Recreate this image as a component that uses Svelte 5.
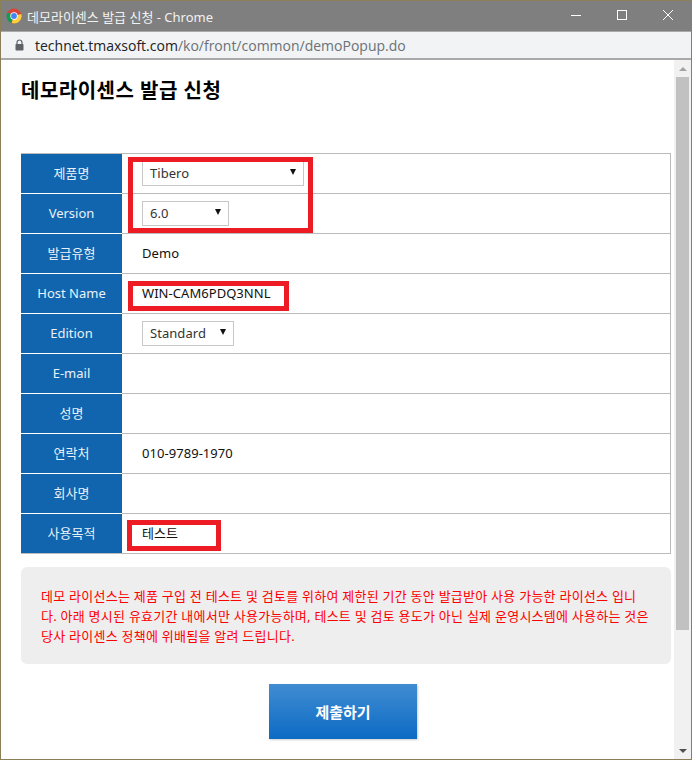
<script>
  const rows = [
    { label: '제품명', kind: 'select', value: 'Tibero', width: 162 },
    { label: 'Version', kind: 'select', value: '6.0', width: 87 },
    { label: '발급유형', kind: 'text', value: 'Demo' },
    { label: 'Host Name', kind: 'input', value: 'WIN-CAM6PDQ3NNL' },
    { label: 'Edition', kind: 'select', value: 'Standard', width: 92 },
    { label: 'E-mail', kind: 'input', value: '' },
    { label: '성명', kind: 'input', value: '' },
    { label: '연락처', kind: 'input', value: '010-9789-1970' },
    { label: '회사명', kind: 'input', value: '' },
    { label: '사용목적', kind: 'input', value: '테스트' }
  ];
</script>

<div class="window">
  <header class="titlebar">
    <svg class="chrome" width="16" height="16" viewBox="0 0 16 16">
      <circle cx="8" cy="8" r="7.5" fill="#db4437" />
      <path d="M8 8 L1.5 4.2 A7.5 7.5 0 0 0 5.6 15.1 Z" fill="#0f9d58" />
      <path d="M8 8 L15.3 6 A7.5 7.5 0 0 1 5.6 15.1 Z" fill="#ffcd40" />
      <circle cx="8" cy="8" r="3.7" fill="#fff" />
      <circle cx="8" cy="8" r="2.9" fill="#4285f4" />
    </svg>
    <span class="title">데모라이센스 발급 신청 - Chrome</span>
    <div class="controls">
      <svg width="12" height="12" viewBox="0 0 12 12"><path d="M1 6.5h10" stroke="#fff" fill="none" /></svg>
      <svg width="12" height="12" viewBox="0 0 12 12"><rect x="1.5" y="1.5" width="9" height="9" stroke="#fff" fill="none" /></svg>
      <svg width="12" height="12" viewBox="0 0 12 12"><path d="M1 1l10 10M11 1L1 11" stroke="#fff" fill="none" /></svg>
    </div>
  </header>
  <div class="addressbar">
    <svg width="9" height="12" viewBox="0 0 9 12">
      <path d="M2 5V3.5a2.5 2.5 0 0 1 5 0V5" fill="none" stroke="#5f6368" stroke-width="1.2" />
      <rect x="0.5" y="5" width="8" height="6.5" rx="0.8" fill="#5f6368" />
    </svg>
    <span class="url"><span class="host">technet.tmaxsoft.com</span>/ko/front/common/demoPopup.do</span>
  </div>
  <div class="viewport">
    <main class="page">
      <h1>데모라이센스 발급 신청</h1>
      <div class="table">
        {#each rows as row}
          <div class="row">
            <div class="label">{row.label}</div>
            <div class="cell">
              {#if row.kind === 'select'}
                <span class="select" style="width: {row.width}px">
                  <span class="value">{row.value}</span><i class="arrow"></i>
                </span>
              {:else}
                {row.value}
              {/if}
            </div>
          </div>
        {/each}
        <span class="mark mark-a"></span>
        <span class="mark mark-b"></span>
        <span class="mark mark-c"></span>
      </div>
      <p class="notice">데모 라이선스는 제품 구입 전 테스트 및 검토를 위하여 제한된 기간 동안 발급받아 사용 가능한 라이선스 입니다. 아래 명시된 유효기간 내에서만 사용가능하며, 테스트 및 검토 용도가 아닌 실제 운영시스템에 사용하는 것은 당사 라이센스 정책에 위배됨을 알려 드립니다.</p>
      <div class="actions"><button>제출하기</button></div>
    </main>
    <aside class="scrollbar">
      <span class="up"></span>
      <span class="thumb"></span>
      <span class="down"></span>
    </aside>
  </div>
</div>

<style>
  :global(body) { margin: 0; }
  .window {
    width: 692px;
    height: 760px;
    box-sizing: border-box;
    border: 1px solid #8b7f58;
    display: flex;
    flex-direction: column;
    overflow: hidden;
    font-family: "Noto Sans", "Noto Sans CJK KR", sans-serif;
    background: #fff;
  }
  .titlebar {
    height: 30px;
    flex: none;
    background: #7f7f7f;
    display: flex;
    align-items: center;
    padding-left: 5px;
    color: #fff;
    box-sizing: border-box;
  }
  .title { margin-left: 5px; font-size: 13px; color: #f2f2f2; }
  .controls {
    margin-left: auto;
    display: flex;
    gap: 34px;
    padding-right: 17px;
    padding-bottom: 2px;
    align-items: center;
  }
  .addressbar {
    height: 29px;
    flex: none;
    box-sizing: border-box;
    background: #f1f3f4;
    border-top: 1px solid #a9a9a9;
    border-bottom: 2px solid #a9a9a9;
    display: flex;
    align-items: center;
    padding-left: 14px;
    gap: 11px;
  }
  .url { font-family: "Open Sans", sans-serif; font-size: 14px; color: #6b7177; }
  .host { color: #202124; }
  .viewport { flex: 1; display: flex; min-height: 0; }
  .page { flex: 1; padding: 0 2px 0 20px; min-width: 0; }
  h1 {
    margin: 18px 0 0;
    font-size: 20px;
    line-height: 26px;
    font-weight: 700;
    color: #000;
    letter-spacing: 0.5px;
  }
  .table {
    position: relative;
    margin-top: 49px;
    border: 1px solid #bbb;
    border-left: 0;
    width: 650px;
    box-sizing: border-box;
  }
  .row { display: flex; height: 40px; box-sizing: border-box; border-bottom: 1px solid #bbb; }
  .row:last-of-type { border-bottom: 0; height: 39px; }
  .label {
    width: 101px;
    flex: none;
    background: #1165ae;
    color: #e8f1f8;
    font-size: 13px;
    display: flex;
    align-items: center;
    justify-content: center;
    margin-bottom: -1px;
    border-bottom: 1px solid #fff;
    padding-bottom: 2px;
    box-sizing: border-box;
  }
  .row:last-of-type .label { margin-bottom: 0; border-bottom: 0; }
  .cell {
    flex: 1;
    display: flex;
    align-items: center;
    padding: 0 0 2px 20px;
    font-size: 13px;
    letter-spacing: 0.05px;
    color: #111;
  }
  .select {
    box-sizing: border-box;
    height: 25px;
    border: 1px solid #c8c8c8;
    padding: 0 7px;
    display: flex;
    align-items: center;
    justify-content: space-between;
    font-size: 13px;
    color: #333;
    margin-top: 2px;
  }
  .value { padding-bottom: 1px; }
  .arrow {
    width: 0;
    height: 0;
    border-left: 3px solid transparent;
    border-right: 3px solid transparent;
    border-top: 6px solid #111;
    margin-bottom: 4px;
  }
  .mark { position: absolute; border: 5px solid #ed1c24; box-sizing: border-box; }
  .mark-a { left: 107px; top: 3px; width: 185px; height: 76px; }
  .mark-b { left: 107px; top: 127px; width: 161px; height: 30px; }
  .mark-c { left: 106px; top: 366px; width: 94px; height: 31px; }
  .notice {
    margin: 13px 0 0;
    width: 650px;
    height: 97px;
    box-sizing: border-box;
    background: #eee;
    border-radius: 6px;
    padding: 19px 20px 0;
    font-size: 13px;
    letter-spacing: 0.25px;
    line-height: 20px;
    color: #f00;
    word-break: break-all;
  }
  .actions { display: flex; justify-content: flex-start; margin-top: 20px; padding-left: 248px; }
  button {
    width: 148px;
    height: 55px;
    border: 0;
    background: linear-gradient(#418cd2, #0c6bc4);
    color: #fff;
    font: 700 15px "Noto Sans CJK KR", sans-serif;
    box-shadow: 1px 1px 2px #ccc;
  }
  .scrollbar {
    width: 17px;
    flex: none;
    background: #f1f1f1;
    display: flex;
    flex-direction: column;
    align-items: center;
    position: relative;
  }
  .thumb { width: 13px; height: 553px; background: #c1c1c1; margin-top: 6px; }
  .up, .down { width: 0; height: 0; border-left: 4px solid transparent; border-right: 4px solid transparent; }
  .up { border-bottom: 4px solid #a3a3a3; margin-top: 7px; }
  .down { border-top: 4px solid #505050; margin-top: auto; margin-bottom: 6px; }
</style>
